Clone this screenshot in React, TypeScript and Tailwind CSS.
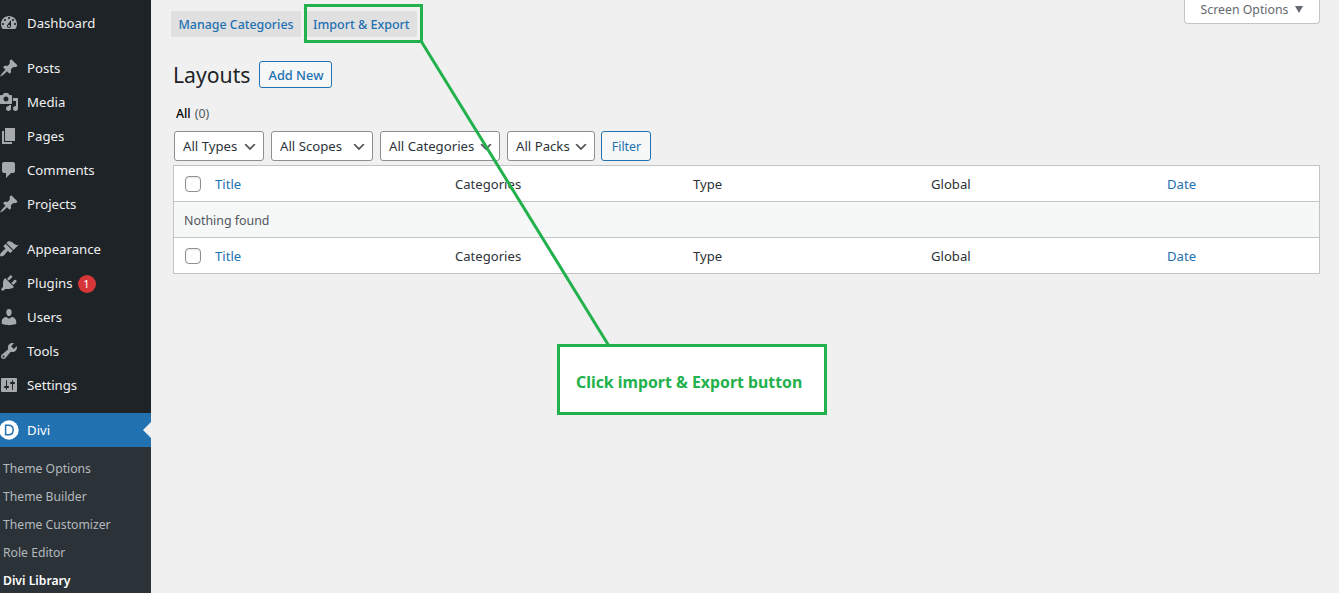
import type { ReactNode } from "react";

const icons = {
  dashboard:
    "M3.76 16h12.48c1.1-1.37 1.76-3.11 1.76-5 0-4.42-3.58-8-8-8s-8 3.58-8 8c0 1.89.66 3.63 1.76 5zM10 4c.55 0 1 .45 1 1s-.45 1-1 1-1-.45-1-1 .45-1 1-1zM6 6c.55 0 1 .45 1 1s-.45 1-1 1-1-.45-1-1 .45-1 1-1zm8 0c.55 0 1 .45 1 1s-.45 1-1 1-1-.45-1-1 .45-1 1-1zm-5.37 5.55L12 7v6c0 1.1-.9 2-2 2s-2-.9-2-2c0-.57.24-1.08.63-1.45zM4 10c.55 0 1 .45 1 1s-.45 1-1 1-1-.45-1-1 .45-1 1-1zm12 0c.55 0 1 .45 1 1s-.45 1-1 1-1-.45-1-1 .45-1 1-1zm-5 3c0-.55-.45-1-1-1s-1 .45-1 1 .45 1 1 1 1-.45 1-1z",
  pin: "M10.44 3.02l1.82-1.82 6.36 6.35-1.83 1.82c-1.05-.68-2.48-.57-3.41.36l-.75.75c-.92.93-1.04 2.35-.35 3.41l-1.83 1.82-2.41-2.41-2.8 2.79c-.42.42-3.38 2.71-3.8 2.29s1.86-3.39 2.28-3.81l2.79-2.79L4.1 9.36l1.83-1.82c1.05.69 2.48.57 3.4-.36l.75-.75c.93-.92 1.05-2.35.36-3.41z",
  media:
    "M13 11V4c0-.55-.45-1-1-1h-1.67L9 1H5L3.67 3H2c-.55 0-1 .45-1 1v7c0 .55.45 1 1 1h10c.55 0 1-.45 1-1zM7 4.5c1.38 0 2.5 1.12 2.5 2.5S8.38 9.5 7 9.5 4.5 8.38 4.5 7 5.62 4.5 7 4.5zM14 6h5v10.5c0 1.38-1.12 2.5-2.5 2.5S14 17.88 14 16.5s1.12-2.5 2.5-2.5c.17 0 .34.02.5.05V9h-3V6zm-4 8.05V13h2v3.5c0 1.38-1.12 2.5-2.5 2.5S7 17.88 7 16.5 8.12 14 9.5 14c.17 0 .34.02.5.05z",
  page: "M6 15V2h10v13H6zm-1 1h8v2H3V5h2v11z",
  comments: "M5 2h9c1.1 0 2 .9 2 2v7c0 1.1-.9 2-2 2h-2l-5 5v-5H5c-1.1 0-2-.9-2-2V4c0-1.1.9-2 2-2z",
  appearance:
    "M14.48 11.06L7.41 3.99l1.5-1.5c.5-.56 2.3-.47 3.51.32 1.21.8 1.43 1.28 2.91 2.1 1.18.64 2.45 1.26 4.45.85zm-.71.71L6.7 4.7 4.93 6.47c-.39.39-.39 1.02 0 1.41l1.06 1.06c.39.39.39 1.03 0 1.42-.6.6-1.43 1.11-2.21 1.69-.35.26-.7.53-1.01.84C1.43 14.23.4 16.08 1.4 17.07c.99 1 2.84-.03 4.18-1.36.31-.31.58-.66.85-1.02.57-.78 1.08-1.61 1.69-2.21.39-.39 1.02-.39 1.41 0l1.06 1.06c.39.39 1.02.39 1.41 0z",
  plugins:
    "M13.11 4.36L9.87 7.6 8 5.73l3.24-3.24c.35-.34 1.05-.2 1.56.32.52.51.66 1.21.31 1.55zm-8 1.77l.91-1.12 9.01 9.01-1.19.84c-.71.71-2.63 1.16-3.82 1.16H6.14L4.9 17.26c-.59.59-1.54.59-2.12 0-.59-.58-.59-1.53 0-2.12l1.24-1.24v-3.88c0-1.13.4-3.19 1.09-3.89zm7.26 3.97l3.24-3.24c.34-.35 1.04-.21 1.55.31.52.51.66 1.21.31 1.55l-3.24 3.25z",
  users:
    "M10 9.25c-2.27 0-2.73-3.44-2.73-3.44C7 4.02 7.82 2 9.97 2c2.16 0 2.98 2.02 2.71 3.81 0 0-.41 3.44-2.68 3.44zm0 2.57L12.72 10c2.39 0 4.52 2.33 4.52 4.53v2.49s-3.65 1.13-7.24 1.13c-3.65 0-7.24-1.13-7.24-1.13v-2.49c0-2.25 1.94-4.48 4.47-4.48z",
  tools:
    "M16.68 9.77c-1.34 1.34-3.3 1.67-4.95.99l-5.41 6.52c-.99.99-2.59.99-3.58 0s-.99-2.59 0-3.57l6.52-5.42c-.68-1.65-.35-3.61.99-4.95 1.28-1.28 3.12-1.62 4.72-1.06l-2.89 2.89 2.82 2.82 2.86-2.87c.53 1.58.18 3.39-1.08 4.65zM3.81 16.21c.4.39 1.04.39 1.43 0 .4-.4.4-1.04 0-1.43-.39-.4-1.03-.4-1.43 0-.39.39-.39 1.03 0 1.43z",
  settings:
    "M18 16V4c0-.55-.45-1-1-1H3c-.55 0-1 .45-1 1v12c0 .55.45 1 1 1h14c.55 0 1-.45 1-1zM8 11h1c.55 0 1 .45 1 1s-.45 1-1 1H8v1.5c0 .28-.22.5-.5.5s-.5-.22-.5-.5V13H6c-.55 0-1-.45-1-1s.45-1 1-1h1V5.5c0-.28.22-.5.5-.5s.5.22.5.5V11zm5-2h-1c-.55 0-1-.45-1-1s.45-1 1-1h1V5.5c0-.28.22-.5.5-.5s.5.22.5.5V7h1c.55 0 1 .45 1 1s-.45 1-1 1h-1v5.5c0 .28-.22.5-.5.5s-.5-.22-.5-.5V9z",
};

type IconName = keyof typeof icons;

function MenuItem({ icon, label, badge }: { icon: IconName; label: string; badge?: string }) {
  return (
    <a className="flex h-[34px] items-center text-[#f0f0f1]">
      <svg viewBox="0 0 20 20" className="-ml-px size-5 shrink-0 fill-[#a7aaad]">
        <path d={icons[icon]} />
      </svg>
      <span className="ml-2">{label}</span>
      {badge && (
        <span className="mt-0.5 ml-[5px] flex size-[18px] items-center justify-center rounded-full bg-[#d63638] text-[11px] text-white">
          {badge}
        </span>
      )}
    </a>
  );
}

function Sidebar() {
  return (
    <nav className="flex w-[151px] shrink-0 flex-col overflow-hidden bg-[#1d2327] pt-1.5 text-[13.2px]">
      <MenuItem icon="dashboard" label="Dashboard" />
      <div className="mt-[11px]">
        <MenuItem icon="pin" label="Posts" />
        <MenuItem icon="media" label="Media" />
        <MenuItem icon="page" label="Pages" />
        <MenuItem icon="comments" label="Comments" />
        <MenuItem icon="pin" label="Projects" />
      </div>
      <div className="mt-[11px]">
        <MenuItem icon="appearance" label="Appearance" />
        <MenuItem icon="plugins" label="Plugins" badge="1" />
        <MenuItem icon="users" label="Users" />
        <MenuItem icon="tools" label="Tools" />
        <MenuItem icon="settings" label="Settings" />
      </div>
      <a className="mt-[11px] flex h-[34px] shrink-0 items-center bg-[#2271b1] text-white">
        <svg viewBox="0 0 20 20" className="-ml-px size-5 shrink-0">
          <circle cx="10" cy="10" r="9.7" fill="#fff" />
          <path d="M6.6 5.2h2.9c2.9 0 4.7 1.8 4.7 4.8s-1.8 4.8-4.7 4.8H6.6z" fill="none" stroke="#2271b1" strokeWidth="1.5" />
        </svg>
        <span className="ml-2">Divi</span>
        <svg viewBox="0 0 8 16" className="ml-auto h-4 w-2 fill-[#f0f0f0]">
          <path d="M8 0v16L0 8z" />
        </svg>
      </a>
      <div className="h-[146px] shrink-0 bg-[#2c3338] pt-2 pl-[3px] text-[12.2px] leading-7 text-[#b4b9be]">
        <div>Theme Options</div>
        <div>Theme Builder</div>
        <div>Theme Customizer</div>
        <div>Role Editor</div>
        <div className="font-semibold text-white">Divi Library</div>
      </div>
    </nav>
  );
}

function Select({ children, width }: { children: ReactNode; width: string }) {
  return (
    <div className={`flex h-[30px] items-center justify-between rounded-[3px] border border-[#8c8f94] bg-white pr-[5px] pl-2 text-[13.2px] text-[#2c3338] ${width}`}>
      {children}
      <svg viewBox="0 0 20 20" className="mt-px size-4 shrink-0 fill-[#555]">
        <path d="M5 6l5 5 5-5 2 1-7 7-7-7 2-1z" />
      </svg>
    </div>
  );
}

function HeadRow() {
  return (
    <div className="grid h-[35px] grid-cols-[41px_240px_238px_238px_236px_1fr] items-center text-[#2c3338]">
      <span className="ml-[11px] size-4 rounded-[4px] border border-[#8c8f94] bg-white shadow-[inset_0_1px_2px_rgba(0,0,0,0.1)]" />
      <span className="text-[#2271b1]">Title</span>
      <span>Categories</span>
      <span>Type</span>
      <span>Global</span>
      <span className="text-[#2271b1]">Date</span>
    </div>
  );
}

export default function App() {
  return (
    <div className="relative flex h-[593px] w-[1339px] overflow-hidden bg-[#f0f0f0] font-['Noto_Sans','Open_Sans',sans-serif] text-[13.1px] leading-5 whitespace-nowrap">
      <Sidebar />
      <main className="flex min-w-0 flex-1 flex-col pr-[19px] pl-[22px]">
        <div className="flex h-[43px] justify-between">
          <div className="-ml-0.5 flex">
            <a className="mt-[11px] flex h-[26px] w-[130px] items-center justify-center rounded-[2px] bg-[#e0e0e0] pt-0.5 text-[12.4px] font-medium text-[#2271b1]">
              Manage Categories
            </a>
            <a className="mt-1 ml-[3px] flex h-[39px] w-[119px] items-center border-[3px] border-[#22b14c]">
              <span className="flex h-[26px] w-[110px] items-center rounded-[2px] bg-[#e0e0e0] pt-0.5 pl-1.5 text-[12.5px] font-medium text-[#2271b1]">
                Import &amp; Export
              </span>
            </a>
          </div>
          <button className="flex h-6 w-[136px] items-center justify-center rounded-b-[4px] border border-t-0 border-[#c3c4c7] bg-white pb-[3px] text-[12.3px] text-[#646970]">
            Screen Options
            <svg viewBox="0 0 8 7" className="mb-0.5 ml-[7px] h-[7px] w-2 fill-[#646970]">
              <path d="M0 0h8L4 7z" />
            </svg>
          </button>
        </div>
        <div className="mt-[18px] flex h-[27px] items-center">
          <h1 className="w-[86px] text-[21.2px] text-[#1d2327]">Layouts</h1>
          <button className="flex h-[27px] w-[73px] items-center justify-center rounded-[3px] border border-[#2271b1] bg-[#f6f7f7] pl-px text-[12.8px] font-medium text-[#2271b1]">
            Add New
          </button>
        </div>
        <div className="mt-4 ml-[3px] flex h-5 items-center gap-1 text-[12.3px]">
          <span className="font-medium text-black">All</span>
          <span className="text-[#50575e]">(0)</span>
        </div>
        <div className="mt-[7px] ml-px flex">
          <Select width="w-[90px]">All Types</Select>
          <span className="w-[7px]" />
          <Select width="w-[102px]">All Scopes</Select>
          <span className="w-[7px]" />
          <Select width="w-[120px]">All Categories</Select>
          <span className="w-[7px]" />
          <Select width="w-[88px]">All Packs</Select>
          <button className="ml-1.5 flex h-[30px] w-[50px] items-center justify-center rounded-[3px] border border-[#2271b1] bg-[#f6f7f7] pt-0.5 pl-px text-[12.4px] text-[#2271b1]">
            Filter
          </button>
        </div>
        <section className="mt-1 border border-[#c3c4c7] bg-white">
          <HeadRow />
          <div className="flex h-[37px] items-center border-y border-[#c3c4c7] bg-[#f6f7f7] pt-0.5 pl-2.5 text-[12.4px] text-[#50575e]">
            Nothing found
          </div>
          <HeadRow />
        </section>
      </main>

      <svg viewBox="0 0 1339 593" className="pointer-events-none absolute inset-0 h-[593px] w-[1339px]">
        <path d="M421 41L609 346" stroke="#22b14c" strokeWidth="3" />
      </svg>
      <div className="absolute top-[344px] left-[557px] flex h-[71px] w-[270px] items-center border-[3px] border-[#22b14c] bg-white pt-1 pl-4 text-[15.85px] font-bold text-[#22b14c]">
        Click import &amp; Export button
      </div>
    </div>
  );
}
